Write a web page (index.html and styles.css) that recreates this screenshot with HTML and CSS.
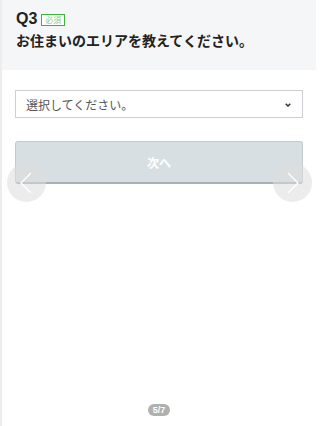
FILE: index.html
```html
<!DOCTYPE html>
<html lang="ja">
<head>
<meta charset="utf-8">
<link rel="stylesheet" href="styles.css">
</head>
<body>
<div class="page">
  <header class="qhead">
    <div class="qline">
      <span class="qnum">Q3</span>
      <span class="req">必須</span>
    </div>
    <div class="qtext">お住まいのエリアを教えてください。</div>
  </header>
  <main class="body">
    <div class="select">
      <span class="placeholder">選択してください。</span>
      <svg class="chev" width="6" height="4" viewBox="0 0 6 4"><path d="M0.7 0.7 L3 3 L5.3 0.7" fill="none" stroke="#333" stroke-width="1.5"/></svg>
    </div>
    <div class="next">次へ</div>
  </main>
  <div class="nav nav-left"><svg width="39" height="39" viewBox="0 0 39 39"><path d="M24 10 L14 20 L24 30" fill="none" stroke="#fff" stroke-width="1.3"/></svg></div>
  <div class="nav nav-right"><svg width="39" height="39" viewBox="0 0 39 39"><path d="M15 10 L25 20 L15 30" fill="none" stroke="#fff" stroke-width="1.3"/></svg></div>
  <footer class="pager"><span class="pill">5/7</span></footer>
</div>
</body>
</html>
```
FILE: styles.css
```css
html, body { margin: 0; padding: 0; }
body {
  font-family: "Noto Sans CJK JP", "Liberation Sans", sans-serif;
  background: #fff;
  color: #222;
}
.page {
  position: relative;
  width: 316px;
  height: 426px;
  box-sizing: border-box;
  border-left: 2px solid #ededed;
  display: flex;
  flex-direction: column;
}
.qhead {
  background: #f5f6f8;
  height: 70px;
  box-sizing: border-box;
  padding: 9px 14px 0 14px;
}
.qline {
  display: flex;
  align-items: center;
  gap: 4px;
  height: 20px;
}
.qnum {
  font-family: "Liberation Sans", sans-serif;
  font-weight: bold;
  font-size: 16px;
  color: #222;
}
.req {
  border: 1px solid #3cb43c;
  color: #8ccc8c;
  background: #fff;
  font-size: 8px;
  line-height: 10px;
  padding: 0 3px;
  margin-top: 1px;
}
.qtext {
  font-weight: bold;
  font-size: 14px;
  line-height: 20px;
  margin-top: 1px;
  color: #222;
}
.body {
  flex: 1;
  padding: 20px 13px 0 13px;
  display: flex;
  flex-direction: column;
}
.select {
  height: 28px;
  box-sizing: border-box;
  border: 1px solid #ccd0d5;
  background: #fff;
  display: flex;
  align-items: center;
  justify-content: space-between;
  padding: 0 11px 0 10px;
}
.placeholder {
  font-size: 12px;
  color: #555;
}
.chev { margin-top: 1px; }
.next {
  margin-top: 23px;
  height: 43px;
  box-sizing: border-box;
  background: #d8dfe2;
  border: 1px solid #c4cbce;
  border-bottom: 2px solid #a9b0b3;
  border-radius: 3px;
  color: #fff;
  font-weight: bold;
  font-size: 12px;
  display: flex;
  align-items: center;
  justify-content: center;
}
.nav {
  position: absolute;
  top: 163px;
  width: 39px;
  height: 39px;
  border-radius: 50%;
  background: rgba(220, 220, 220, 0.55);
}
.nav svg { display: block; }
.nav-left { left: 5px; }
.nav-right { left: 271px; }
.pager {
  height: 22px;
  display: flex;
  justify-content: center;
  align-items: flex-start;
}
.pill {
  background: #b0b0b0;
  color: #fff;
  font-family: "Liberation Sans", sans-serif;
  font-weight: bold;
  font-size: 9px;
  line-height: 12px;
  height: 12px;
  padding: 0 5px;
  border-radius: 6px;
}
```
